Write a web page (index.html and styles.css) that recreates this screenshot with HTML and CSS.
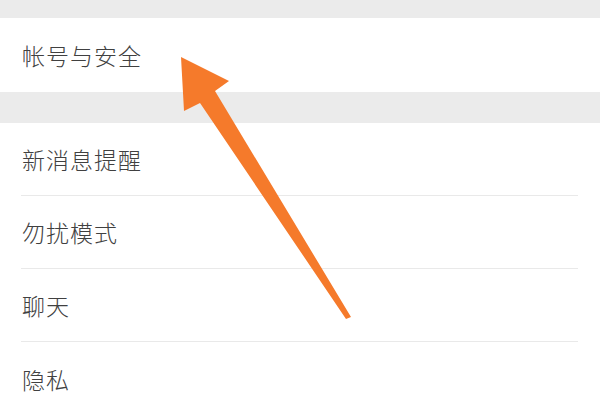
FILE: index.html
```html
<!DOCTYPE html>
<html lang="zh-CN">
<head>
<meta charset="utf-8">
<link rel="stylesheet" href="styles.css">
</head>
<body>
<div class="page">
  <div class="band band-top"></div>
  <div class="group">
    <div class="row"><span class="label">帐号与安全</span></div>
  </div>
  <div class="band band-mid"></div>
  <div class="group">
    <div class="row divided"><span class="label">新消息提醒</span></div>
    <div class="row divided"><span class="label">勿扰模式</span></div>
    <div class="row divided"><span class="label">聊天</span></div>
    <div class="row"><span class="label">隐私</span></div>
  </div>
  <svg class="arrow" width="600" height="400" viewBox="0 0 600 400">
    <polygon points="181,57 229,81 215,91 351,317 346,319 200,103 184,111" fill="#f57a2b"/>
  </svg>
</div>
</body>
</html>
```
FILE: styles.css
```css
html, body {
  margin: 0;
  padding: 0;
  background: #ffffff;
}
.page {
  position: relative;
  width: 600px;
  height: 400px;
  overflow: hidden;
  font-family: "Noto Sans CJK SC", "Noto Sans", sans-serif;
}
.band {
  background: #ebebeb;
}
.band-top {
  height: 18px;
}
.band-mid {
  height: 31px;
}
.group {
  background: #ffffff;
}
.row {
  height: 74px;
  display: flex;
  align-items: center;
  padding-left: 22px;
  position: relative;
}
.row.divided {
  height: 73px;
}
.row.divided::after {
  content: "";
  position: absolute;
  left: 21px;
  right: 22px;
  bottom: 0;
  height: 1px;
  background: #e9e9e9;
}
.label {
  font-size: 23px;
  font-weight: 300;
  letter-spacing: 1px;
  color: #404040;
  line-height: 1;
}
.arrow {
  position: absolute;
  left: 0;
  top: 0;
}
```
